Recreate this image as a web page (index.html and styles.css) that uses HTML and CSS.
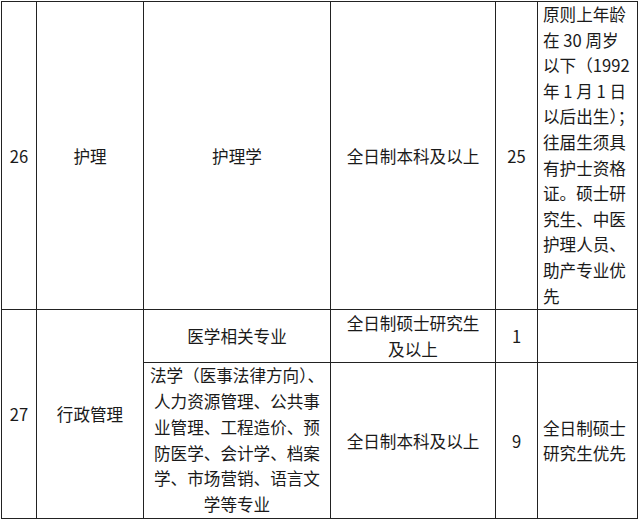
FILE: index.html
```html
<!DOCTYPE html>
<html lang="zh-CN">
<head>
<meta charset="utf-8">
<title>招聘岗位表</title>
<link rel="stylesheet" href="styles.css">
</head>
<body>
<table class="grid">
  <colgroup>
    <col class="c-no"><col class="c-post"><col class="c-major"><col class="c-edu"><col class="c-num"><col class="c-note">
  </colgroup>
  <tr class="r26">
    <td>26</td>
    <td>护理</td>
    <td>护理学</td>
    <td>全日制本科及以上</td>
    <td>25</td>
    <td class="note note-long">原则上年龄<br>在 30 周岁<br>以下（1992<br>年 1 月 1 日<br>以后出生<span class="sq">）</span>；<br>往届生须具<br>有护士资格<br>证。硕士研<br>究生、中医<br>护理人员、<br>助产专业优<br>先</td>
  </tr>
  <tr class="r27a">
    <td rowspan="2">27</td>
    <td rowspan="2">行政管理</td>
    <td>医学相关专业</td>
    <td>全日制硕士研究生<br>及以上</td>
    <td>1</td>
    <td class="note"></td>
  </tr>
  <tr class="r27b">
    <td class="major-list">法学（医事法律方向<span class="sq">）</span>、<br>人力资源管理、公共事<br>业管理、工程造价、预<br>防医学、会计学、档案<br>学、市场营销、语言文<br>学等专业</td>
    <td>全日制本科及以上</td>
    <td>9</td>
    <td class="note">全日制硕士<br>研究生优先</td>
  </tr>
</table>
</body>
</html>
```
FILE: styles.css
```css
html, body {
  margin: 0;
  padding: 0;
  background: #ffffff;
}

body {
  font-family: "Noto Sans CJK SC", "Noto Sans", sans-serif;
  font-size: 16.6px;
  color: #1a1a1a;
}

.grid {
  border-collapse: collapse;
  table-layout: fixed;
  margin: 1px 0 0 1px;
}

.grid td {
  border: 1px solid #222222;
  padding: 0;
  text-align: center;
  vertical-align: middle;
  white-space: nowrap;
  line-height: 26px;
}

.c-no { width: 35px; }
.c-post { width: 107px; }
.c-major { width: 187px; }
.c-edu { width: 165px; }
.c-num { width: 42px; }
.c-note { width: 100px; }

.r26 { height: 308px; }
.r27a { height: 52px; }
.r27b { height: 155px; }

.grid td.major-list {
  line-height: 25.8px;
}

.grid td.note {
  text-align: left;
  padding-left: 5px;
}

.grid td.note-long {
  line-height: 25.6px;
  vertical-align: top;
}

.r27b td.note {
  line-height: 25px;
}

.sq {
  font-feature-settings: "halt" 1;
}
```
